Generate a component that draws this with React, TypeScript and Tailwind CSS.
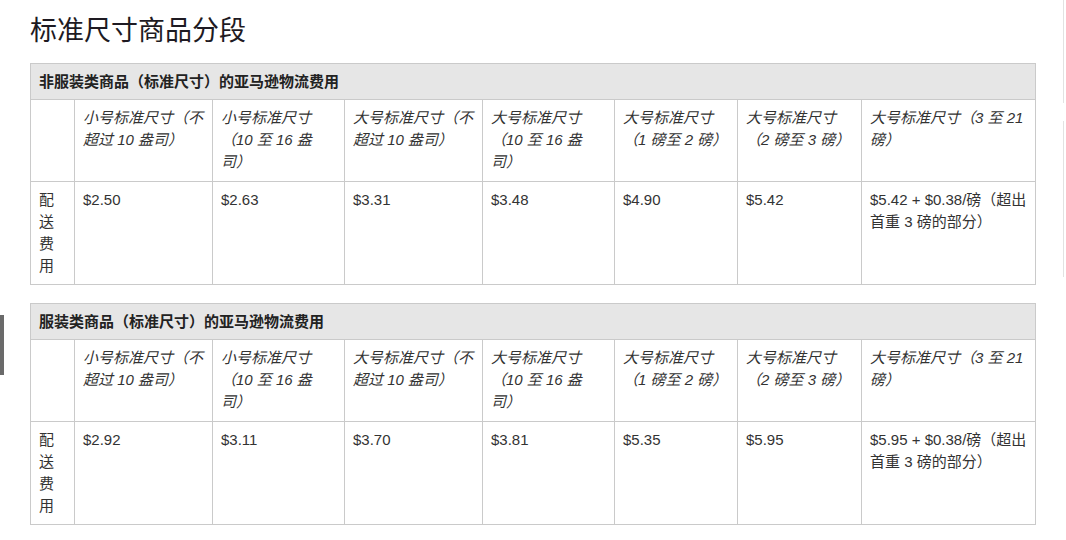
import React from 'react';

const sizeHeaders: string[][] = [
  ['小号标准尺寸（不', '超过 10 盎司）'],
  ['小号标准尺寸', '（10 至 16 盎', '司）'],
  ['大号标准尺寸（不', '超过 10 盎司）'],
  ['大号标准尺寸', '（10 至 16 盎', '司）'],
  ['大号标准尺寸', '（1 磅至 2 磅）'],
  ['大号标准尺寸', '（2 磅至 3 磅）'],
  ['大号标准尺寸（3 至 21', '磅）'],
];

const tables: { title: string; prices: string[][] }[] = [
  {
    title: '非服装类商品（标准尺寸）的亚马逊物流费用',
    prices: [['$2.50'], ['$2.63'], ['$3.31'], ['$3.48'], ['$4.90'], ['$5.42'], ['$5.42 + $0.38/磅（超出', '首重 3 磅的部分）']],
  },
  {
    title: '服装类商品（标准尺寸）的亚马逊物流费用',
    prices: [['$2.92'], ['$3.11'], ['$3.70'], ['$3.81'], ['$5.35'], ['$5.95'], ['$5.95 + $0.38/磅（超出', '首重 3 磅的部分）']],
  },
];

const widths = ['w-[44px]', 'w-[138px]', 'w-[132px]', 'w-[138px]', 'w-[132px]', 'w-[123px]', 'w-[124px]', 'w-[174px]'];

const Lines = ({ lines }: { lines: string[] }) => (
  <>
    {lines.map((l, i) => (
      <div key={i} className="whitespace-nowrap">{l}</div>
    ))}
  </>
);

const FeeTable = ({ title, prices }: { title: string; prices: string[][] }) => (
  <table className="w-[1005px] table-fixed border-collapse border border-[#cacaca] text-[15px] leading-[22px] text-[#333]">
    <colgroup>
      {widths.map((w, i) => (
        <col key={i} className={w} />
      ))}
    </colgroup>
    <thead>
      <tr>
        <th colSpan={8} className="bg-[#e6e6e6] border border-[#cacaca] px-[8px] pt-[7px] pb-[6px] text-left font-bold text-[#222]">
          {title}
        </th>
      </tr>
    </thead>
    <tbody>
      <tr>
        <td className="border border-[#cacaca] px-[8px] py-[7px]" />
        {sizeHeaders.map((h, i) => (
          <td key={i} className="border border-[#cacaca] px-[8px] pt-[7px] pb-[8px] align-top italic">
            <Lines lines={h} />
          </td>
        ))}
      </tr>
      <tr>
        <td className="border border-[#cacaca] px-[8px] pt-[7px] pb-[7px] align-top break-all">配送费用</td>
        {prices.map((p, i) => (
          <td key={i} className="border border-[#cacaca] px-[8px] pt-[7px] pb-[7px] align-top">
            <Lines lines={p} />
          </td>
        ))}
      </tr>
    </tbody>
  </table>
);

export default function App() {
  return (
    <div
      className="relative w-[1066px] h-[540px] bg-white overflow-hidden"
      style={{ fontFamily: '"Liberation Sans", Arial, "Noto Sans CJK SC", sans-serif' }}
    >
      <div className="pl-[30px] pt-[13px]">
        <h1 className="text-[27px] leading-[36px] text-[#1e1a22] font-normal mb-[14px]">标准尺寸商品分段</h1>
        <div className="flex flex-col gap-[18px]">
          {tables.map((t, i) => (
            <FeeTable key={i} title={t.title} prices={t.prices} />
          ))}
        </div>
      </div>
      {/* edge artifacts */}
      <div className="absolute left-0 top-[315px] w-[4px] h-[60px] bg-[#6a6a6a]" />
      <div className="absolute left-[1063px] top-0 w-[1px] h-[103px] bg-[#e2e2e2]" />
      <div className="absolute left-[1063px] top-[121px] w-[1px] h-[156px] bg-[#e2e2e2]" />
    </div>
  );
}
